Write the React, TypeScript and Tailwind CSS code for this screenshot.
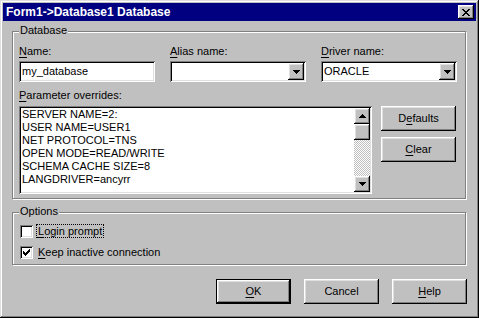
import React from "react";

const raised =
  "shadow-[inset_-1px_-1px_#000,inset_1px_1px_#fff,inset_-2px_-2px_#808080,inset_2px_2px_#dfdfdf]";
const sunken =
  "shadow-[inset_1px_1px_#808080,inset_-1px_-1px_#fff,inset_2px_2px_#000,inset_-2px_-2px_#dfdfdf]";

function Arrow({ dir }: { dir: "up" | "down" }) {
  const pts = dir === "up" ? "3.5,0 7,4 0,4" : "0,0 7,0 3.5,4";
  return (
    <svg width="7" height="4" viewBox="0 0 7 4" shapeRendering="crispEdges">
      <polygon points={pts} fill="#000" />
    </svg>
  );
}

function ArrowBtn({ dir }: { dir: "up" | "down" }) {
  return (
    <div className={`w-[16px] h-[16px] bg-[#c0c0c0] flex items-center justify-center ${raised}`}>
      <Arrow dir={dir} />
    </div>
  );
}

function Combo({ value }: { value: string }) {
  return (
    <div className={`h-[21px] w-[136px] bg-white flex items-center p-[2px] ${sunken}`}>
      <div className="flex-1 pl-[1px] text-[11px] leading-[13px] text-black">{value}</div>
      <div className={`w-[16px] h-[17px] bg-[#c0c0c0] flex items-center justify-center ${raised}`}>
        <Arrow dir="down" />
      </div>
    </div>
  );
}

function Btn({ children, isDefault }: { children: React.ReactNode; isDefault?: boolean }) {
  if (isDefault) {
    return (
      <div className="w-[75px] h-[25px] border border-black flex">
        <div className={`flex-1 bg-[#c0c0c0] flex items-center justify-center text-[11px] text-black ${raised}`}>
          {children}
        </div>
      </div>
    );
  }
  return (
    <div className={`w-[75px] h-[25px] bg-[#c0c0c0] flex items-center justify-center text-[11px] text-black ${raised}`}>
      {children}
    </div>
  );
}

function Check({ checked }: { checked: boolean }) {
  return (
    <div className={`w-[13px] h-[13px] bg-white flex items-center justify-center ${sunken}`}>
      {checked && (
        <svg width="7" height="7" viewBox="0 0 7 7" shapeRendering="crispEdges">
          <path
            d="M6 0h1v1H6zM5 1h2v1H5zM0 2h1v1H0zM4 2h3v1H4zM0 3h2v1H0zM3 3h3v1H3zM0 4h5v1H0zM1 5h3v1H1zM2 6h1v1H2z"
            fill="#000"
          />
        </svg>
      )}
    </div>
  );
}

function Group({ title, className, children }: { title: string; className?: string; children: React.ReactNode }) {
  return (
    <div
      className={`relative border border-[#808080] shadow-[inset_1px_1px_#fff,1px_1px_#fff] ${className ?? ""}`}
    >
      <div className="absolute left-[6px] top-[-8px] bg-[#c0c0c0] px-[1px] text-[11px] leading-[13px] text-black">
        {title}
      </div>
      {children}
    </div>
  );
}

const U = ({ children }: { children: React.ReactNode }) => (
  <span className="underline underline-offset-[2px]">{children}</span>
);

export default function App() {
  const lines = [
    "SERVER NAME=2:",
    "USER NAME=USER1",
    "NET PROTOCOL=TNS",
    "OPEN MODE=READ/WRITE",
    "SCHEMA CACHE SIZE=8",
    "LANGDRIVER=ancyrr",
  ];
  return (
    <div className="w-[479px] h-[318px] bg-[#c0c0c0] font-['Liberation_Sans',Arial,sans-serif] text-black select-none">
      <div
        className={`w-full h-full p-[3px] flex flex-col shadow-[inset_-1px_-1px_#000,inset_1px_1px_#dfdfdf,inset_-2px_-2px_#808080,inset_2px_2px_#fff]`}
      >
        {/* Title bar */}
        <div className="h-[18px] bg-[#000080] flex items-center pl-[3px] pr-[2px]">
          <div className="flex-1 text-white font-bold text-[12px] leading-[14px]">Form1-&gt;Database1 Database</div>
          <div className={`w-[16px] h-[14px] bg-[#c0c0c0] flex items-center justify-center ${raised}`}>
            <svg width="8" height="7" viewBox="0 0 8 7" shapeRendering="crispEdges">
              <path
                d="M0 0h2v1H0zM6 0h2v1H6zM1 1h2v1H1zM5 1h2v1H5zM2 2h4v1H2zM3 3h2v1H3zM2 4h4v1H2zM1 5h2v1H1zM5 5h2v1H5zM0 6h2v1H0zM6 6h2v1H6z"
                fill="#000"
              />
            </svg>
          </div>
        </div>

        <div className="pl-[9px] pt-[10px] flex flex-col">
          <Group title="Database" className="w-[454px] h-[168px] pl-[6px] pt-[13px]">
            <div className="flex gap-[15px] text-[11px] leading-[13px]">
              <div className="flex flex-col gap-[3px] w-[136px]">
                <div>
                  <U>N</U>ame:
                </div>
                <div className={`h-[21px] bg-white flex items-center px-[3px] ${sunken}`}>my_database</div>
              </div>
              <div className="flex flex-col gap-[3px] w-[136px]">
                <div>
                  <U>A</U>lias name:
                </div>
                <Combo value="" />
              </div>
              <div className="flex flex-col gap-[3px] w-[136px]">
                <div>
                  <U>D</U>river name:
                </div>
                <Combo value="ORACLE" />
              </div>
            </div>
            <div className="mt-[7px] text-[11px] leading-[13px]">
              <U>P</U>arameter overrides:
            </div>
            <div className="mt-[4px] flex gap-[9px]">
              <div className={`w-[353px] h-[88px] bg-white p-[2px] flex ${sunken}`}>
                <div className="flex-1 pl-[1px] text-[11px] leading-[13px] whitespace-pre">
                  {lines.map((l) => (
                    <div key={l}>{l}</div>
                  ))}
                </div>
                <div className="w-[16px] flex flex-col">
                  <ArrowBtn dir="up" />
                  <div className={`w-[16px] h-[16px] bg-[#c0c0c0] ${raised}`} />
                  <div className="flex-1 bg-[repeating-conic-gradient(#fff_0_25%,#c0c0c0_0_50%)] bg-[length:2px_2px]" />
                  <ArrowBtn dir="down" />
                </div>
              </div>
              <div className="flex flex-col gap-[6px]">
                <Btn>
                  D<U>e</U>faults
                </Btn>
                <Btn>
                  <U>C</U>lear
                </Btn>
              </div>
            </div>
          </Group>

          <Group title="Options" className="mt-[13px] w-[454px] h-[53px] pl-[7px] pt-[11px]">
            <div className="flex flex-col gap-[8px] text-[11px] leading-[13px]">
              <div className="flex items-center gap-[3px]">
                <Check checked={false} />
                <div className="border border-dotted border-black px-[1px] h-[14px] flex items-center">
                  <U>L</U>ogin prompt
                </div>
              </div>
              <div className="flex items-center gap-[4px]">
                <Check checked={true} />
                <div className="px-[1px]">
                  <U>K</U>eep inactive connection
                </div>
              </div>
            </div>
          </Group>

          <div className="mt-[14px] flex justify-end gap-[13px] pr-[9px]">
            <Btn isDefault>
              <U>O</U>K
            </Btn>
            <Btn>Cancel</Btn>
            <Btn>
              <U>H</U>elp
            </Btn>
          </div>
        </div>
      </div>
    </div>
  );
}
